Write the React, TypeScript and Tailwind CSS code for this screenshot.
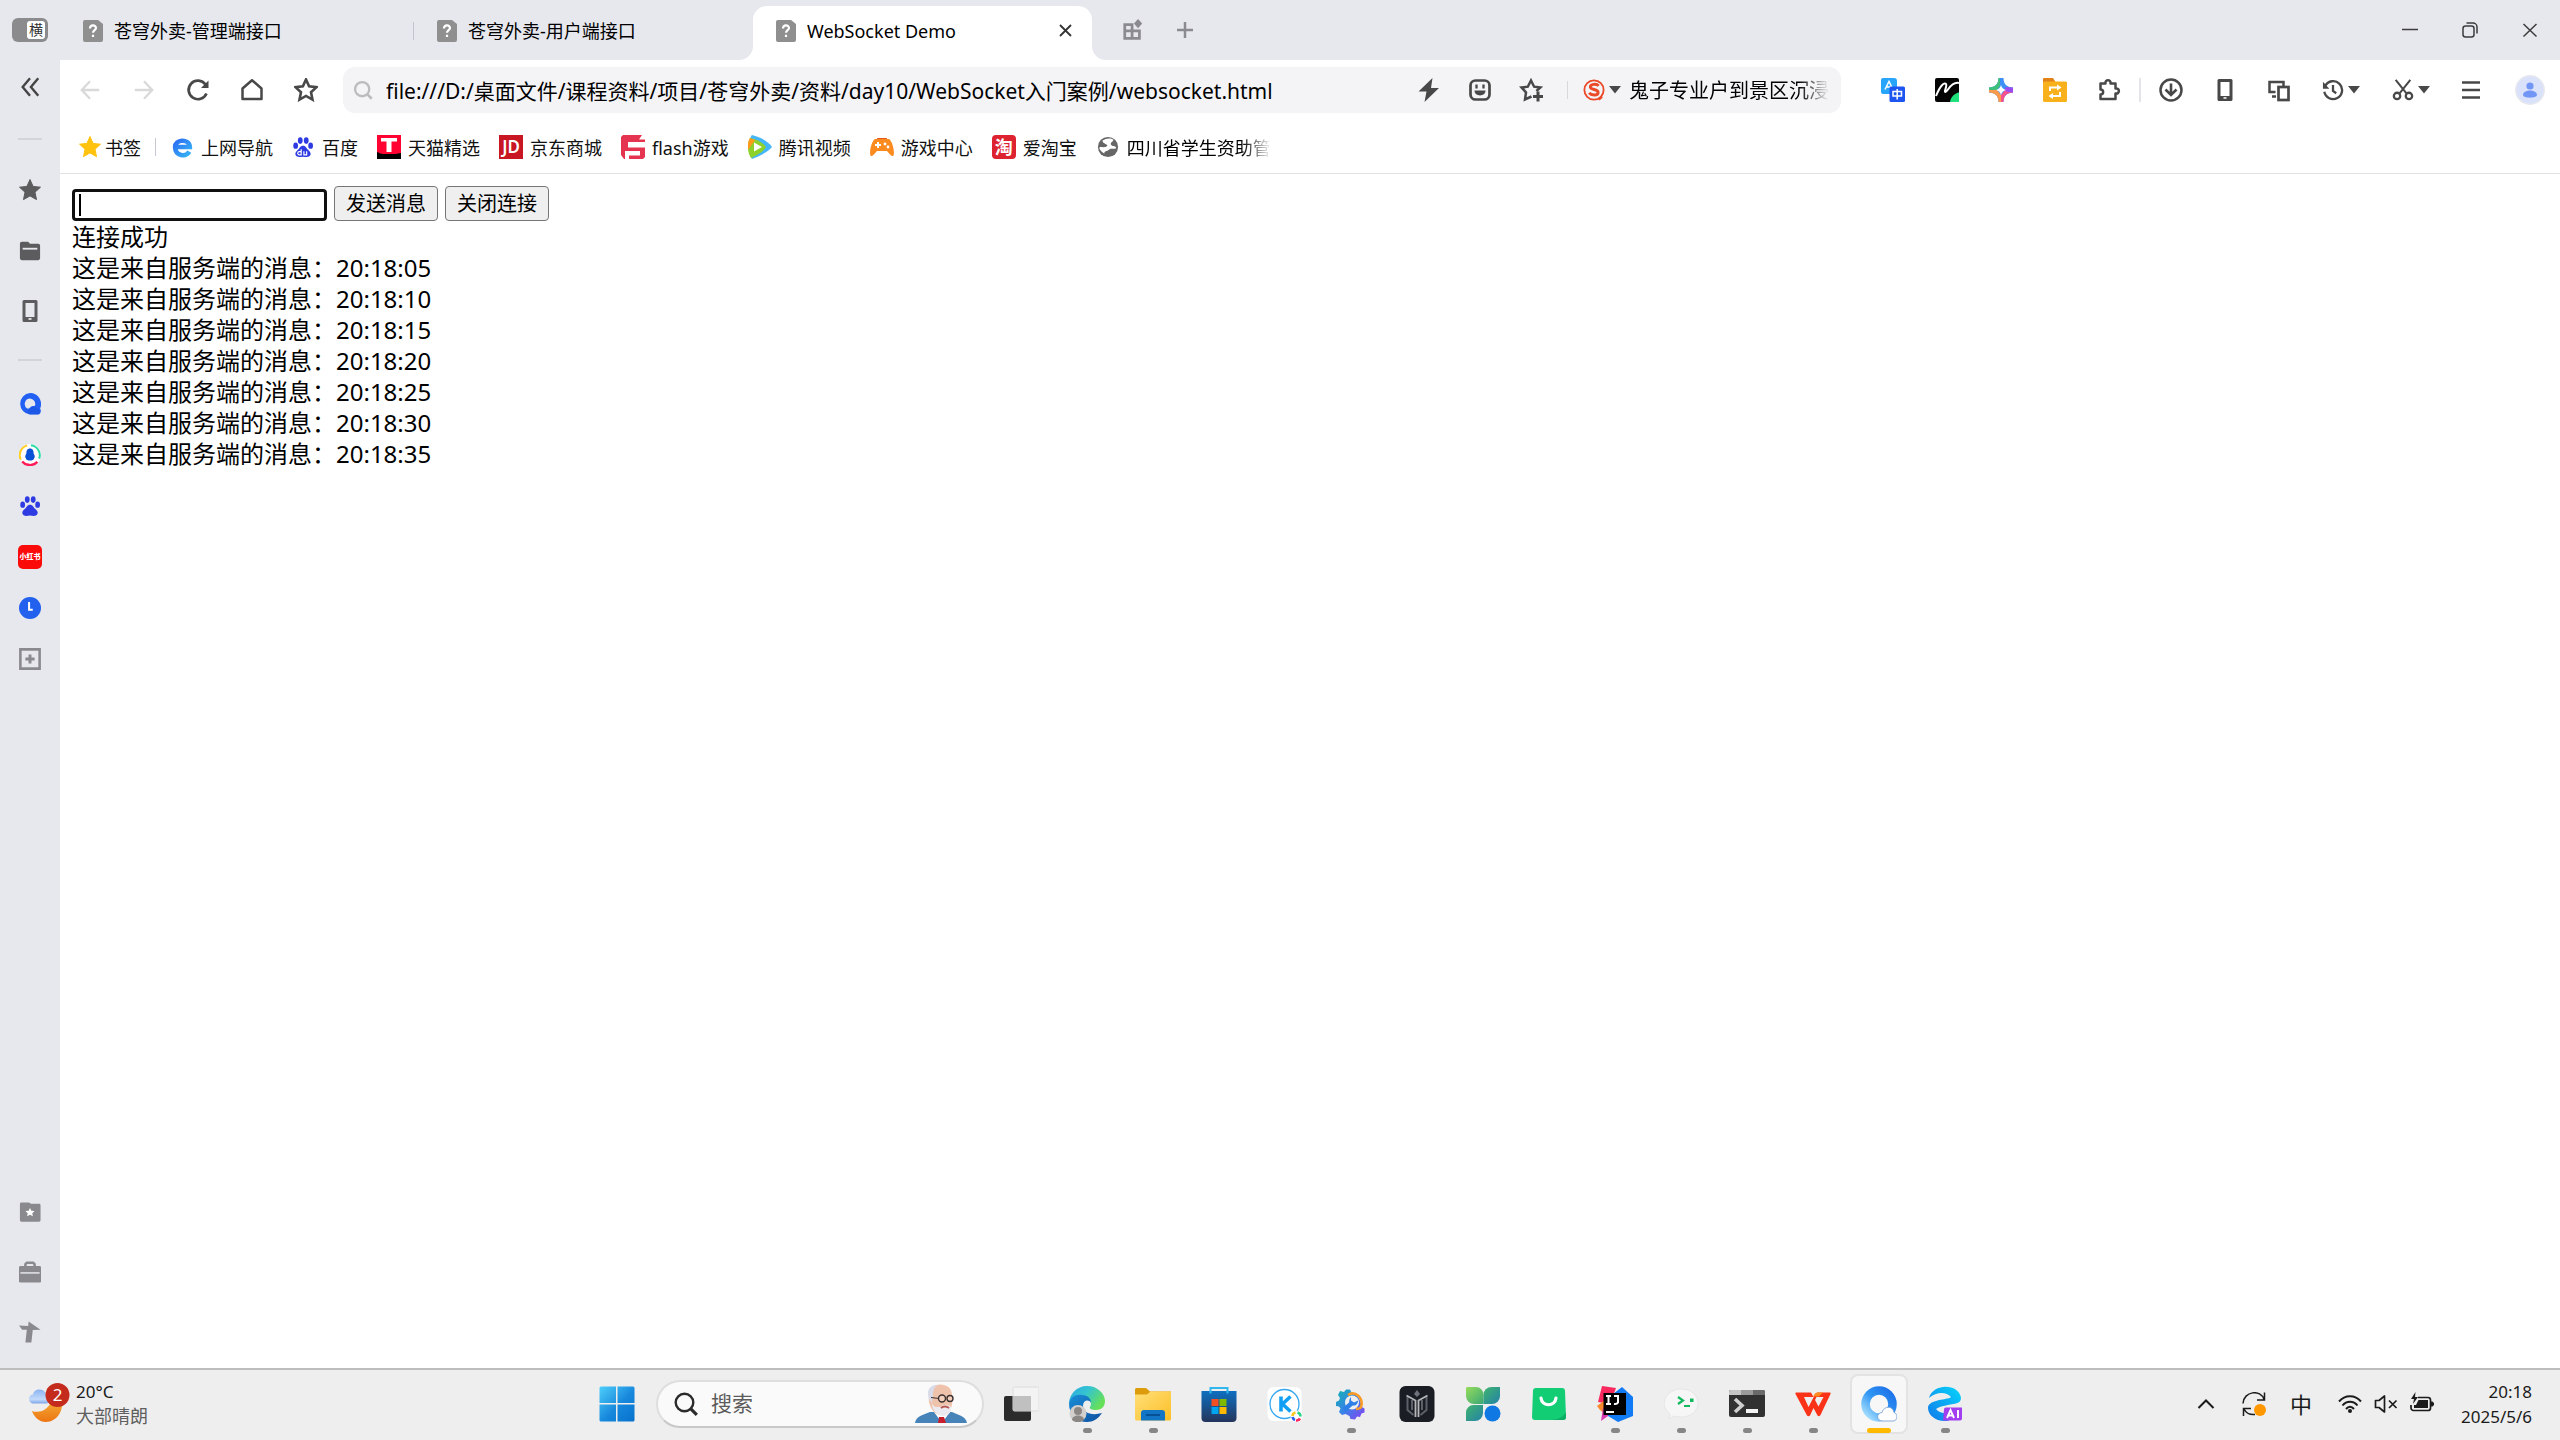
import React from "react";

type IconProps = { size?: number; box?: string; className?: string; children: React.ReactNode };

function Svg({ size = 24, box = "0 0 24 24", className = "", children }: IconProps) {
  return (
    <svg width={size} height={size} viewBox={box} fill="none" className={"shrink-0 " + className} aria-hidden="true">
      {children}
    </svg>
  );
}

const line = { stroke: "currentColor", strokeWidth: 2.5, fill: "none" } as const;

/* ---------- shared glyphs ---------- */

const STAR = "M12 1.5l3.1 6.9 7.4.8-5.5 5 1.5 7.4L12 17.9l-6.5 3.7L7 14.2l-5.500-5 7.400-.8z";

function Caret() {
  return (
    <svg width="14" height="8" viewBox="0 0 14 8" className="shrink-0 text-[#484848]" aria-hidden="true">
      <path d="M1 0h12L7 7.500z" fill="currentColor" />
    </svg>
  );
}

function PhoneIcon() {
  return (
    <Svg>
      <path {...line} d="M6 2.500h12v19H6z" strokeWidth={3} strokeLinejoin="round" />
      <path d="M6 18h12v4H6z" fill="currentColor" />
      <path d="M10.500 19.200h3v1.500h-3z" fill="#fff" />
    </Svg>
  );
}

function DocIcon() {
  return (
    <svg width="22" height="22" viewBox="0 0 22 22" className="shrink-0" aria-hidden="true">
      <path d="M3 0h13l5 4v16a2 2 0 0 1-2 2H3a2 2 0 0 1-2-2V2a2 2 0 0 1 2-2z" fill="#8f8f8f" />
      <path d="M8 8.500c0-4 6-4 6-.5 0 2.200-3 2.200-3 4.800M11 14.800v2.200" stroke="#fff" strokeWidth="2.200" fill="none" />
    </svg>
  );
}

function PawIcon({ face = false }: { face?: boolean }) {
  return (
    <Svg size={22}>
      <g fill="#2e3be2">
        <ellipse cx="4" cy="10.500" rx="2.600" ry="3.500" />
        <ellipse cx="9" cy="5" rx="2.600" ry="3.600" />
        <ellipse cx="15.500" cy="5" rx="2.600" ry="3.600" />
        <ellipse cx="20.300" cy="10.500" rx="2.600" ry="3.500" />
        <path d="M12 10.500c3 0 3.600 2.600 5.500 4.400 2.500 2.300 3.600 4 2.400 6.200-1.400 2.600-5 1.400-7.900 1.400s-6.500 1.200-7.900-1.400c-1.200-2.200-.1-3.900 2.400-6.200 1.900-1.800 2.500-4.400 5.500-4.400z" />
      </g>
      {face && <path d="M10 14.500v6H8a1.500 1.500 0 0 1 0-3.500h2M13 16.500v4h3v-4" stroke="#fff" strokeWidth="1.300" />}
    </Svg>
  );
}

/* ---------- tab strip ---------- */

function TabStrip() {
  return (
    <header className="flex h-[60px] items-end bg-[#e7e8ee] text-[18px]">
      <div className="flex h-[60px] w-[60px] shrink-0 items-center justify-center">
        <button aria-label="横向标签" className="flex h-6 w-9 items-center justify-end rounded-md bg-[#8b8b8d] p-[3px]">
          <span className="flex h-[18px] w-[18px] items-center justify-center rounded-[3px] bg-white text-[14px] leading-none text-[#333]">横</span>
        </button>
      </div>
      <div role="tablist" className="flex items-end">
        <button role="tab" aria-selected="false" className="flex h-[54px] w-[354px] items-center gap-[10px] pb-[5px] pl-[22px]">
          <DocIcon />
          <span className="pt-0.5">苍穹外卖-管理端接口</span>
          <span className="ml-auto h-[18px] w-px bg-[#c3c4d0]" />
        </button>
        <button role="tab" aria-selected="false" className="flex h-[54px] w-[339px] items-center gap-[10px] pb-[5px] pl-[22px]">
          <DocIcon />
          <span className="pt-0.5">苍穹外卖-用户端接口</span>
        </button>
        <div className="relative flex h-[54px] w-[339px] items-center rounded-t-[14px] bg-white pr-4 pb-[5px] pl-[22px]">
          <svg width="14" height="14" viewBox="0 0 14 14" className="absolute bottom-0 -left-[14px]" aria-hidden="true">
            <path d="M14 0v14H0A14 14 0 0 0 14 0z" fill="#fff" />
          </svg>
          <svg width="14" height="14" viewBox="0 0 14 14" className="absolute -right-[14px] bottom-0" aria-hidden="true">
            <path d="M0 0v14h14A14 14 0 0 1 0 0z" fill="#fff" />
          </svg>
          <button role="tab" aria-selected="true" className="flex grow items-center gap-[10px]">
            <DocIcon />
            <span className="pt-0.5">WebSocket Demo</span>
          </button>
          <button aria-label="关闭标签" className="flex h-[22px] w-[22px] items-center justify-center text-[#333]">
            <svg width="13" height="13" viewBox="0 0 13 13" aria-hidden="true">
              <path d="M1 1l11 11M12 1L1 12" stroke="currentColor" strokeWidth="1.800" />
            </svg>
          </button>
        </div>
      </div>
      <div className="flex h-[60px] items-center pl-[15px] text-[#8b8b8f]">
        <button aria-label="标签管理" className="flex w-[52px] justify-center">
          <Svg size={22}>
            <path d="M3 6h8v15H3zM11 13h8v8H3M3 13h8" stroke="currentColor" strokeWidth="3" />
            <path d="M17.500 0l4.500 5-4.500 5L13 5z" fill="currentColor" />
          </Svg>
        </button>
        <button aria-label="新建标签" className="flex w-[52px] justify-center">
          <svg width="16" height="16" viewBox="0 0 16 16" aria-hidden="true">
            <path d="M8 0v16M0 8h16" stroke="currentColor" strokeWidth="2.500" />
          </svg>
        </button>
      </div>
      <div className="ml-auto flex h-[60px] text-[#3c3c3c]">
        <button aria-label="最小化" className="flex w-[60px] items-center justify-center">
          <svg width="16" height="16" viewBox="0 0 16 16" fill="none" stroke="currentColor" strokeWidth="1.500">
            <path d="M0 7.500h16" />
          </svg>
        </button>
        <button aria-label="还原" className="flex w-[60px] items-center justify-center">
          <svg width="16" height="16" viewBox="0 0 16 16" fill="none" stroke="currentColor" strokeWidth="1.500">
            <rect x="1" y="4" width="11" height="11" rx="2.500" />
            <path d="M4.500 1H11a4 4 0 0 1 4 4v6.500" />
          </svg>
        </button>
        <button aria-label="关闭" className="flex w-[60px] items-center justify-center">
          <svg width="16" height="16" viewBox="0 0 16 16" fill="none" stroke="currentColor" strokeWidth="1.500">
            <path d="M1.500 2l13 12.500M14.500 2l-13 12.500" />
          </svg>
        </button>
      </div>
    </header>
  );
}

/* ---------- toolbar ---------- */

function ToolButton({ label, children, className = "w-[54px]" }: { label: string; children: React.ReactNode; className?: string }) {
  return (
    <button aria-label={label} className={"flex h-[46px] shrink-0 items-center justify-center " + className}>
      {children}
    </button>
  );
}

function Toolbar() {
  return (
    <div className="flex h-[60px] items-center pl-[3px] text-[#484848]">
      <ToolButton label="后退">
        <Svg size={22} className="text-[#d9d9d9]"><path {...line} d="M22 12H3M12 2.500L3 12l9 9.500" /></Svg>
      </ToolButton>
      <ToolButton label="前进">
        <Svg size={22} className="text-[#d9d9d9]"><path {...line} d="M2 12h19M12 2.500L21 12l-9 9.500" /></Svg>
      </ToolButton>
      <ToolButton label="刷新">
        <Svg>
          <path {...line} strokeWidth={2.700} d="M20.500 15.500A9.300 9.300 0 1 1 19.500 6.500" />
          <path d="M22.500 2.500v7.500h-7.500z" fill="currentColor" />
        </Svg>
      </ToolButton>
      <ToolButton label="主页">
        <Svg><path {...line} d="M2.500 10.500L12 2.200l9.500 8.300V21h-19z" strokeLinejoin="round" /></Svg>
      </ToolButton>
      <ToolButton label="收藏">
        <Svg><path {...line} d={STAR} strokeWidth={2.600} /></Svg>
      </ToolButton>

      <div className="ml-[10px] flex h-[46px] min-w-0 grow items-center rounded-xl bg-[#f4f4f7] pl-[10px]">
        <Svg size={20} className="text-[#bcbcbe]">
          <circle cx="11" cy="11" r="8.500" stroke="currentColor" strokeWidth="2.800" />
          <path d="M17 17l5.500 5.500" stroke="currentColor" strokeWidth="3.200" />
        </Svg>
        <input
          aria-label="地址"
          defaultValue="file:///D:/桌面文件/课程资料/项目/苍穹外卖/资料/day10/WebSocket入门案例/websocket.html"
          className="ml-[13px] h-full min-w-0 grow bg-transparent text-[21px] text-black outline-none"
        />
        <ToolButton label="极速模式" className="w-[51px]">
          <Svg><path d="M15.500 0L1.500 13.500h8L7.500 24l14.500-14h-8z" fill="currentColor" /></Svg>
        </ToolButton>
        <ToolButton label="表情" className="w-[51px]">
          <Svg>
            <rect x="2.500" y="2.500" width="19" height="19" rx="5" {...line} strokeWidth={2.700} />
            <path d="M8.500 6.500v4M15.500 6.500v4" stroke="currentColor" strokeWidth="2.300" />
            <path d="M6.500 12.500h11c0 6.500-11 6.500-11 0z" fill="currentColor" />
          </Svg>
        </ToolButton>
        <ToolButton label="添加收藏" className="w-[51px]">
          <Svg>
            <path {...line} d="M12.500 18.500L6 21.500l1-7L2.500 9.400l6.300-.7L12 2.500l3.100 6.200 6.300.7-4 3.600" />
            <path d="M19 13.500v10M14 18.500h10" stroke="currentColor" strokeWidth="3" />
          </Svg>
        </ToolButton>
        <span className="ml-[11px] h-[18px] w-px bg-[#d8d8da]" />
        <ToolButton label="搜索引擎" className="ml-[14px] w-10 gap-[3px]">
          <Svg size={22}>
            <circle cx="12" cy="12" r="10.500" stroke="#ea4a28" strokeWidth="2" />
            <path d="M17 7.500c-2-2.600-9.500-2.200-9 1.400.5 3.500 8.500 1.600 8.500 5.700 0 3.800-7.500 3.600-9.800.6" stroke="#ea4a28" strokeWidth="3.200" />
            <path d="M16 21.500l4.500-3.500 1 2.500-3.500 3z" fill="#ea4a28" />
          </Svg>
          <Caret />
        </ToolButton>
        <span className="ml-[7px] w-[200px] shrink-0 overflow-hidden bg-linear-to-r from-black from-85% to-transparent bg-clip-text pt-0.5 text-[20px] whitespace-nowrap text-transparent">
          鬼子专业户到景区沉浸
        </span>
        <span className="w-3 shrink-0" />
      </div>

      <ToolButton label="翻译" className="ml-[25px] w-[54px]">
        <Svg>
          <path d="M0 2a2 2 0 0 1 2-2h11a3 3 0 0 1 3 3v13H2a2 2 0 0 1-2-2z" fill="#27a5fd" />
          <path d="M4 11.500L8 3.500l4 8M5.500 9h5" stroke="#fff" strokeWidth="1.500" />
          <rect x="8.500" y="8.500" width="15.500" height="15.500" rx="1.500" fill="#1e55f0" />
          <path d="M12 13.500h8.500v4.500H12zM16.200 11v10.500" stroke="#fff" strokeWidth="1.500" />
        </Svg>
      </ToolButton>
      <ToolButton label="笔记">
        <Svg>
          <rect width="24" height="24" rx="2" fill="#050505" />
          <path d="M1 18C5 8 9 4 11 6c1.500 2-2.500 8-.5 8S16 3 24 5" stroke="#fff" strokeWidth="2" />
          <path d="M24 14.500V24h-9c.5-5 5-9 9-9.500z" fill="#1fe27c" />
        </Svg>
      </ToolButton>
      <ToolButton label="智能助手">
        <Svg>
          <path d="M9.500 0h5c0 6 3.500 9.500 9.500 9.500v5c-6 0-9.500 3.500-9.500 9.500h-5c0-6-3.500-9.500-9.500-9.500v-5c6 0 9.500-3.500 9.500-9.500z" fill="#3d8ff5" />
          <path d="M9.500 0H11v8l-3 4H0V9.500c6 0 9.500-3.500 9.500-9.500z" fill="#3fc07a" />
          <path d="M0 12h8l4 5v7H9.500c0-6-3.500-9.500-9.500-9.500z" fill="#fb9a4b" />
          <path d="M12 24v-7l4-5h8v2.500c-6 0-9.500 3.500-9.500 9.500z" fill="#f5518d" />
          <path d="M17 9l7 .5v5l-5-.5-4-2z" fill="#9a4cf0" />
          <path d="M12 7c1 3 2 4 5 5-3 1-4 2-5 5-1-3-2-4-5-5 3-1 4-2 5-5z" fill="#fff" />
        </Svg>
      </ToolButton>
      <ToolButton label="文件转换">
        <Svg>
          <path d="M0 1a1 1 0 0 1 1-1h9l2.500 4H24v4H0z" fill="#e28118" />
          <rect y="3.500" width="24" height="20.500" rx="1.500" fill="#f8b11b" />
          <path d="M7 13V9.500h8.500M17 14v4H8.500" stroke="#fff" strokeWidth="2" />
          <path d="M14 6.500l4.500 3-4.500 3zM10 15l-4.500 3 4.500 3z" fill="#fff" />
        </Svg>
      </ToolButton>
      <ToolButton label="扩展">
        <Svg>
          <path {...line} strokeLinejoin="round" d="M3.500 5.500h5c-.8-4.500 5.800-4.500 5 0h5v5c4.500-.8 4.500 5.800 0 5v5.500h-15v-4.500c3.500 0 3.500-5 0-5z" />
        </Svg>
      </ToolButton>
      <span className="mx-[3px] h-6 w-0.5 shrink-0 bg-[#e4e4ea]" />
      <ToolButton label="下载">
        <Svg>
          <circle cx="12" cy="12" r="10.500" {...line} />
          <path d="M12 5.500v11M6.500 11.500L12 17l5.500-5.500" stroke="currentColor" strokeWidth="2.600" />
        </Svg>
      </ToolButton>
      <ToolButton label="手机"><PhoneIcon /></ToolButton>
      <ToolButton label="多屏互动">
        <Svg>
          <path {...line} d="M8.500 14H2.500V4h14v4M5 18.500h4" />
          <rect x="11.500" y="9" width="10" height="13" {...line} strokeWidth={2.700} />
        </Svg>
      </ToolButton>
      <ToolButton label="历史" className="w-[70px] gap-[3px]">
        <Svg size={22}>
          <path {...line} d="M3.500 7.500A9.800 9.800 0 1 1 2.500 14" />
          <path d="M1 3v7.500h7z" fill="currentColor" />
          <path {...line} d="M12 6.500v6.500l3.500 2.500" />
        </Svg>
        <Caret />
      </ToolButton>
      <ToolButton label="截图" className="w-[70px] gap-[3px]">
        <Svg size={22}>
          <path d="M4 1l12 15M20 1L8 16" stroke="currentColor" strokeWidth="2.200" />
          <circle cx="5.500" cy="18.500" r="3.500" {...line} />
          <circle cx="18.500" cy="18.500" r="3.500" {...line} />
        </Svg>
        <Caret />
      </ToolButton>
      <ToolButton label="菜单" className="w-[50px]">
        <svg width="18" height="18" viewBox="0 0 18 18"><path d="M0 1.500h18M0 9h18M0 16.500h18" stroke="currentColor" strokeWidth="2.600" /></svg>
      </ToolButton>
      <ToolButton label="账户" className="ml-1 w-[60px]">
        <Svg size={30} box="0 0 30 30">
          <circle cx="15" cy="15" r="14.200" fill="#dae2fb" stroke="#e6e8ee" strokeWidth="1.500" />
          <circle cx="15" cy="11" r="3.600" fill="#7296f5" />
          <path d="M8 20c0-6 14-6 14 0 0 3.500-14 3.500-14 0z" fill="#7296f5" />
        </Svg>
      </ToolButton>
    </div>
  );
}

/* ---------- bookmarks ---------- */

function Bookmark({ icon, label, fade = false }: { icon: React.ReactNode; label: string; fade?: boolean }) {
  return (
    <a href="#" className="flex shrink-0 items-center gap-[7px] whitespace-nowrap">
      <span className="flex w-6 justify-center">{icon}</span>
      {fade ? (
        <span className="w-[144px] overflow-hidden bg-linear-to-r from-black from-80% to-transparent bg-clip-text pt-0.5 text-transparent">{label}</span>
      ) : (
        <span className="pt-0.5">{label}</span>
      )}
    </a>
  );
}

function Bookmarks() {
  return (
    <nav aria-label="书签栏" className="flex h-[54px] items-center gap-[18px] border-b border-[#e2e2e5] pl-[18px] text-[18px] leading-6 text-[#111]">
      <div className="flex items-center gap-[14px]">
        <a href="#" className="flex items-center gap-[3px]">
          <Svg><path d={STAR} fill="#ffc20e" stroke="#ffc20e" /></Svg>
          <span className="pt-0.5">书签</span>
        </a>
        <span className="h-[18px] w-px bg-[#c8c8d4]" />
        <Bookmark
          label="上网导航"
          icon={
            <Svg size={22}>
              <path d="M20 17c-4 6.500-15 5-15.500-4.500C4 3 20 2.500 20.500 12H7" stroke="url(#eg)" strokeWidth="5" />
              <defs>
                <linearGradient id="eg" x1="0" y1="0" x2="1" y2="1">
                  <stop stopColor="#2c6df2" />
                  <stop offset="1" stopColor="#35b4f6" />
                </linearGradient>
              </defs>
            </Svg>
          }
        />
      </div>
      <div className="flex items-center gap-[19px]">
        <Bookmark label="百度" icon={<PawIcon face />} />
        <Bookmark
          label="天猫精选"
          icon={
            <Svg>
              <rect width="24" height="24" fill="#ff0432" />
              <path d="M0 17c3 1 4 2 6 2h12c3 0 4-1 6-1v6H0z" fill="#000" />
              <path d="M4 3h16v3.500h-5.500V17h-5V6.500H4z" fill="#fff" />
            </Svg>
          }
        />
        <Bookmark
          label="京东商城"
          icon={<span className="flex h-6 w-6 items-center justify-center bg-[#c91623] text-[17px] leading-none font-semibold text-white">JD</span>}
        />
        <Bookmark
          label="flash游戏"
          icon={
            <Svg>
              <path d="M2 0h19l-3 4.500h6V7H7v5.500h17V22l-2 2H8v-3.500h11V16H4v8H3l-3-4V2z" fill="#e5344f" />
            </Svg>
          }
        />
        <Bookmark
          label="腾讯视频"
          icon={
            <Svg>
              <path d="M4 0c-4 4-4 19 0 24C12 21 20 17 24 12 20 6 12 2 4 0z" fill="#45b6f7" />
              <path d="M2 3C-1 8-1 17 3 23c6-3 12-6 15-11C14 7 8 4 2 3z" fill="#8fd12b" />
              <path d="M2 3C0 6-.5 10 0 15l7-10z" fill="#ff9a1c" />
              <path d="M6 7.500v9l8-4.500z" fill="#fff" />
            </Svg>
          }
        />
        <Bookmark
          label="游戏中心"
          icon={
            <Svg>
              <path d="M6 5l1.500-2h9L18 5z" fill="#e8541a" />
              <path d="M5 4h14c3.500 2 6 13 4.500 16.500-2 2-4.500-2.500-6.500-4.500H7c-2 2-4.500 6.500-6.500 4.500C-1 17 1.500 6 5 4z" fill="#fb8a1f" />
              <path d="M8 7v6M5 10h6" stroke="#fff" strokeWidth="2" />
              <circle cx="15" cy="9" r="1.400" fill="#fff" /><circle cx="18" cy="12" r="1.400" fill="#fff" />
            </Svg>
          }
        />
        <Bookmark
          label="爱淘宝"
          icon={<span className="flex h-6 w-6 items-center justify-center rounded-sm bg-[#dd2230] text-[18px] leading-none font-bold text-white">淘</span>}
        />
        <Bookmark
          fade
          label="四川省学生资助管理"
          icon={
            <Svg size={22}>
              <circle cx="12" cy="12" r="11" fill="#666" />
              <path d="M6 5c4-3 9-3 12-1-1 3-3 2-3 5 1 3 5 1 6 4-2 2-6 0-8 2s-5 1-5 4C3 16 2 13 3 12c3 0 6 1 8-1s-5-2-5-6z" fill="#fff" />
            </Svg>
          }
        />
      </div>
    </nav>
  );
}

/* ---------- side bar ---------- */

function SideButton({ label, children, className = "h-[61px]" }: { label: string; children: React.ReactNode; className?: string }) {
  return (
    <button aria-label={label} className={"flex w-full items-center justify-center " + className}>
      {children}
    </button>
  );
}

function SideBar() {
  return (
    <aside className="flex w-[60px] shrink-0 flex-col items-center bg-[#e7e8ee] text-[#5c5c5e]">
      <SideButton label="展开侧边栏" className="h-[54px] text-[#444]">
        <Svg size={22}><path {...line} strokeWidth={2.600} d="M12 2.500L4 12l8 9.500M21 2.500L13 12l8 9.500" /></Svg>
      </SideButton>
      <span className="mt-6 mb-[19px] h-0.5 w-6 bg-[#d3d4da]" />
      <SideButton label="收藏夹"><Svg><path d={STAR} fill="currentColor" stroke="currentColor" /></Svg></SideButton>
      <SideButton label="文件夹">
        <Svg size={22}>
          <path d="M1 4a2 2 0 0 1 2-2h7l2 2h9a2 2 0 0 1 2 2v14a2 2 0 0 1-2 2H3a2 2 0 0 1-2-2z" fill="currentColor" />
          <path d="M4 9.500h16" stroke="#e7e8ee" strokeWidth="2" />
        </Svg>
      </SideButton>
      <SideButton label="手机" className="h-[60px]"><PhoneIcon /></SideButton>
      <span className="mt-[18px] mb-[17px] h-0.5 w-6 bg-[#d3d4da]" />
      <SideButton label="QQ浏览器" className="h-[51px]">
        <Svg size={22}>
          <path fillRule="evenodd" d="M12 0a12 12 0 0 1 11 17c1.500 2 1 6-2.500 6.500H12A11.800 11.800 0 0 1 12 0zm0 6a6 6 0 0 0-3 11c2.500 1 3-2.500 6-2.800 1.500-.2 2-.2 2.500-.7A6 6 0 0 0 12 6z" fill="#2260f4" />
          <path d="M12 23.500c-5-1-3-6 0-5.500 1-4 6-4 7-1 4-.5 6 5.500 1.500 6.500z" fill="#1a4fd8" opacity=".45" />
        </Svg>
      </SideButton>
      <SideButton label="腾讯新闻" className="h-[51px]">
        <Svg size={22}>
          <circle cx="12" cy="12" r="12" fill="#fff" />
          <path d="M2 17A11 11 0 0 1 9 1.500" stroke="#ffce1f" strokeWidth="2.200" />
          <path d="M13 1.300A11 11 0 0 1 22 16" stroke="#2bdaa8" strokeWidth="2.200" />
          <path d="M20 19.500A11 11 0 0 1 3.500 19" stroke="#ff1e5a" strokeWidth="2.600" />
          <path d="M12 5c3 0 4 2.500 4 5.500 1.500 2 1.500 4 .5 5-.5 2-2 2.500-4.500 2.500S8 17.500 7.500 15.500c-1-1-1-3 .5-5C8 7.500 9 5 12 5z" fill="#0a52d6" />
        </Svg>
      </SideButton>
      <SideButton label="百度" className="h-[51px]"><PawIcon /></SideButton>
      <SideButton label="小红书" className="h-[51px]">
        <span className="flex h-6 w-6 items-center justify-center rounded-[5px] bg-[#fb0a0a] text-[7px] leading-none font-black text-white">小红书</span>
      </SideButton>
      <SideButton label="历史" className="h-[51px]">
        <Svg size={22}><circle cx="12" cy="12" r="12" fill="#2260ee" /><path d="M11 5.500V14h4" stroke="#fff" strokeWidth="2.200" /></Svg>
      </SideButton>
      <SideButton label="添加" className="h-[51px] text-[#8a8a8e]">
        <Svg size={22}><path {...line} strokeWidth={2.800} d="M1.500 1.500h21v21h-21z" /><path d="M12 7v10M7 12h10" stroke="currentColor" strokeWidth="3.200" /></Svg>
      </SideButton>
      <div className="mt-auto mb-[6px] w-full text-[#8a8a8e]">
        <SideButton label="收藏文件夹" className="h-[60px]">
          <Svg size={22}>
            <path d="M1 3a1.500 1.500 0 0 1 1.500-1.500H11L13 3h9a1.500 1.500 0 0 1 1.500 1.500V21a1.500 1.500 0 0 1-1.500 1.500H2.500A1.500 1.500 0 0 1 1 21z" fill="currentColor" />
            <path d="M12 7.500l1.500 3 3.500.5-2.500 2.300.6 3.400-3.100-1.600-3.100 1.600.6-3.400L7 11l3.500-.5z" fill="#fff" />
          </Svg>
        </SideButton>
        <SideButton label="工具箱" className="h-[60px]">
          <Svg size={22}>
            <path d="M7 6V3.500L8.500 2h7L17 3.500V6" stroke="currentColor" strokeWidth="2.800" />
            <rect x="0" y="5.500" width="24" height="18" rx="1.500" fill="currentColor" />
            <path d="M1.500 13h21" stroke="#e7e8ee" strokeWidth="1.600" />
          </Svg>
        </SideButton>
        <SideButton label="置顶" className="h-[60px]">
          <Svg size={22}><path d="M0 5l10 .5.5-5L23.500 9.500 15 9.800 13.500 23.500H7L8.500 9.500H3.500z" fill="currentColor" /></Svg>
        </SideButton>
      </div>
    </aside>
  );
}

/* ---------- page ---------- */

const TIMES = ["20:18:05", "20:18:10", "20:18:15", "20:18:20", "20:18:25", "20:18:30", "20:18:35"];

function Page() {
  return (
    <main className="grow bg-white px-3 pt-3 text-[24px] leading-[31px] text-black">
      <div className="flex items-end gap-[7px]">
        <span className="relative flex">
          <input aria-label="消息" className="h-8 w-[255px] rounded-[4px] border-[3px] border-[#101010] px-1 text-[20px] outline-none" />
          <span className="absolute top-[5px] left-[7px] h-[22px] w-0.5 bg-black" />
        </span>
        <button className="h-[35px] rounded-[4px] border border-[#767676] bg-[#efefef] px-[11px] text-[20px] leading-8">发送消息</button>
        <button className="h-[35px] rounded-[4px] border border-[#767676] bg-[#efefef] px-[11px] text-[20px] leading-8">关闭连接</button>
      </div>
      <div>
        <p>连接成功</p>
        {TIMES.map((t) => (
          <p key={t}>这是来自服务端的消息：{t}</p>
        ))}
      </div>
    </main>
  );
}

/* ---------- task bar ---------- */

function TaskButton({ label, dot = false, active = false, children }: { label: string; dot?: boolean; active?: boolean; children: React.ReactNode }) {
  return (
    <button aria-label={label} className="relative flex h-[68px] w-[66px] shrink-0 items-center justify-center">
      {active && <span className="absolute inset-x-1 inset-y-1 rounded-lg border-2 border-[#e3e3e3] bg-[#f7f7f7]" />}
      <svg width="36" height="36" viewBox="0 0 36 36" fill="none" className="relative" aria-hidden="true">{children}</svg>
      {dot && <span className="absolute bottom-[5px] h-[5px] w-[9px] rounded-full bg-[#868686]" />}
      {active && <span className="absolute bottom-[5px] h-[5px] w-6 rounded-full bg-[#ffb900]" />}
    </button>
  );
}

function TaskBar() {
  return (
    <footer className="grid h-[72px] grid-cols-[1fr_auto_1fr] items-center border-t-2 border-[#bdbdbd] bg-[#eeeeee] pb-0.5">
      <button className="flex items-center gap-[6px] pl-7 text-left" aria-label="天气">
        <svg width="42" height="42" viewBox="0 0 42 42" aria-hidden="true" className="shrink-0">
          <defs>
            <linearGradient id="moon" x1="0" y1="0" x2="0" y2="1"><stop stopColor="#f6b53c" /><stop offset="1" stopColor="#ec7412" /></linearGradient>
            <linearGradient id="cloud" x1="0" y1="0" x2="0" y2="1"><stop stopColor="#8bb3f2" /><stop offset=".7" stopColor="#c3dafa" /><stop offset="1" stopColor="#7ea6ea" /></linearGradient>
          </defs>
          <path d="M4 28c8 3 19-2 20-14l9 2c4 12-5 23-15 23-7 0-12-5-14-11z" fill="url(#moon)" />
          <path d="M6 20.500C0 20.500-1 12 5 11.500 6 5 16 5 18 11c6 0 6 9.500 0 9.500z" fill="url(#cloud)" />
          <circle cx="29.500" cy="12" r="12" fill="#c42b1c" />
          <text x="29.500" y="18" textAnchor="middle" fontSize="17" fill="#fff" fontFamily="Noto Sans">2</text>
        </svg>
        <span className="flex flex-col text-[18px] leading-[25px]">
          <span className="text-[17px] text-[#1b1b1b]">20°C</span>
          <span className="text-[#5f5f5f]">大部晴朗</span>
        </span>
      </button>

      <div className="flex items-center pl-0.5">
        <TaskButton label="开始">
          <defs><linearGradient id="win" x1="0" y1="0" x2="36" y2="36" gradientUnits="userSpaceOnUse"><stop stopColor="#4fd0fb" /><stop offset=".55" stopColor="#1688dc" /><stop offset="1" stopColor="#0670cc" /></linearGradient></defs>
          <path d="M2 .5h15v16.500H.5V2A1.500 1.500 0 0 1 2 .5zM18.500.5H34A1.500 1.500 0 0 1 35.500 2v15h-17zM.5 18.500H17v17H2A1.500 1.500 0 0 1 .5 34zM18.500 18.500h17V34a1.500 1.500 0 0 1-1.500 1.500H18.500z" fill="url(#win)" />
        </TaskButton>
        <label className="mr-1 ml-1.5 flex h-12 w-[328px] items-center rounded-full border-2 border-[#dedede] border-b-[#c8c8c8] bg-[#fafafa] pl-4">
          <Svg className="text-[#2b2b2b]">
            <circle cx="10.500" cy="10.500" r="8.800" stroke="currentColor" strokeWidth="2.400" />
            <path d="M16.800 16.800l6 6" stroke="currentColor" strokeWidth="3.200" />
          </Svg>
          <input aria-label="搜索" placeholder="搜索" className="ml-[13px] w-[204px] bg-transparent text-[21px] outline-none placeholder:text-[#5c5c5c]" />
          <svg width="52" height="40" viewBox="0 0 52 40" className="shrink-0" aria-hidden="true">
            <path d="M0 39c1-7 8-8 15-11h22c6 3 14 4 15 11z" fill="#4583b9" />
            <path d="M19 28l8 11 8-11z" fill="#fff" />
            <path d="M24 33h5l2 6h-8z" fill="#c6202f" />
            <path d="M14 12C13-3 37-3 37 11c1 6 0 13-3 17-4 4-11 4-15 0-4-5-6-10-5-16z" fill="#efc3ab" />
            <path d="M14 15c-3-8 0-14 9-14.500C19 3 18 7 18 11l-1 8z" fill="#dadbe8" />
            <path d="M17 19c2 5 5 4 9 4 3-3 6-3 10 0 1 5-3 9-8 9-6-1-11-5-11-13z" fill="#eceaf1" />
            <path d="M26 24q4-3 8 0" stroke="#b5544c" strokeWidth="1.800" fill="none" />
            <circle cx="27" cy="14.500" r="3.500" fill="#f3d0bd" stroke="#3b3030" strokeWidth="1.400" />
            <circle cx="35" cy="14.500" r="3" fill="#f3d0bd" stroke="#3b3030" strokeWidth="1.400" />
            <path d="M16 13.500l8 1" stroke="#3b3030" />
          </svg>
        </label>
        <TaskButton label="任务视图">
          <rect x="1" y="10" width="27" height="25" rx="2" fill="#2b2b2b" />
          <rect x="10" y="1" width="26" height="24" rx="1.500" fill="#f3f3f3" stroke="#dcdcdc" />
          <path d="M10 10h18v15H10z" fill="#c0c0c0" />
        </TaskButton>
        <TaskButton label="Edge" dot>
          <defs>
            <linearGradient id="ed1" x1="0" y1="0" x2="1" y2=".5"><stop stopColor="#2aa8e4" /><stop offset=".5" stopColor="#35c4d0" /><stop offset="1" stopColor="#66e05a" /></linearGradient>
            <linearGradient id="ed2" x1="0" y1="0" x2="1" y2="1"><stop stopColor="#1b8fd8" /><stop offset="1" stopColor="#0c4fa0" /></linearGradient>
          </defs>
          <path d="M0 18C0 8 8 0 18 0c11 0 18 8 18 15 0 6-4 9-9 9-4 0-7-1-6-3 3-5-1-9-6-9C8 12 2 14 0 18z" fill="url(#ed1)" />
          <path d="M0 18c1-7 7-10 13-9 6 0 9 4 9 8-2-4-8-3-8 3 0 7 9 10 19 7-4 6-9 9-15 9C8 36 0 28 0 18z" fill="url(#ed2)" />
          <circle cx="9" cy="27.500" r="8.500" fill="#d2cfcc" />
          <circle cx="9" cy="25" r="4" fill="#8b8784" />
          <path d="M3 34c0-6 12-6 12 0-3 3-9 3-12 0z" fill="#8b8784" />
        </TaskButton>
        <TaskButton label="文件资源管理器" dot>
          <defs><linearGradient id="fo" x1="0" y1="0" x2="1" y2="1"><stop stopColor="#ffe07a" /><stop offset="1" stopColor="#fdbe26" /></linearGradient></defs>
          <path d="M0 3.500A1.500 1.500 0 0 1 1.500 2H11l4 3.500h21V10H0z" fill="#dd9c0c" />
          <path d="M0 8.500h12L15.500 5.500H36V33a1.500 1.500 0 0 1-1.500 1.500h-33A1.500 1.500 0 0 1 0 33z" fill="url(#fo)" />
          <path d="M6 34.500V27a3 3 0 0 1 3-3h18a3 3 0 0 1 3 3v7.500z" fill="#1174c4" />
          <path d="M11 29h14" stroke="#07488a" strokeWidth="1.600" />
        </TaskButton>
        <TaskButton label="Microsoft Store">
          <defs><linearGradient id="st" x1="0" y1="0" x2="0" y2="1"><stop stopColor="#0e6fc0" /><stop offset="1" stopColor="#24355c" /></linearGradient></defs>
          <path d="M.5 5h35v27a4 4 0 0 1-4 4h-27a4 4 0 0 1-4-4z" fill="url(#st)" />
          <path d="M9.500 7.500V2h17v5.500" stroke="#2fb7ee" strokeWidth="2" />
          <path d="M10.500 13h7v7h-7z" fill="#f25022" /><path d="M18.500 13h7v7h-7z" fill="#7fba00" />
          <path d="M10.500 21h7v7h-7z" fill="#00a4ef" /><path d="M18.500 21h7v7h-7z" fill="#ffb900" />
        </TaskButton>
        <TaskButton label="酷狗音乐">
          <rect x=".5" y="1" width="34" height="34" rx="6" fill="#fff" />
          <circle cx="17.500" cy="18" r="14.500" stroke="#35a7ee" strokeWidth="1.300" />
          <path d="M14 10.500v15M23.500 10.500l-8 7.500 8 7.500" stroke="#12a0f4" strokeWidth="3.600" />
          <circle cx="29.500" cy="30.500" r="6" fill="#fff" />
          <path d="M25.500 30a4 4 0 0 1 3-3.500" stroke="#ffc81e" strokeWidth="2.600" /><path d="M30.500 26.500a4 4 0 0 1 3 4" stroke="#2bd48b" strokeWidth="2.600" />
          <path d="M33 32.500a4 4 0 0 1-4 2" stroke="#ff2358" strokeWidth="2.600" /><path d="M28 34a4 4 0 0 1-2.500-3" stroke="#2560ee" strokeWidth="2.600" />
        </TaskButton>
        <TaskButton label="电脑管家" dot>
          <defs><linearGradient id="ge" x1="0" y1="0" x2="1" y2="1"><stop stopColor="#10b3b0" /><stop offset=".5" stopColor="#3b82e8" /><stop offset="1" stopColor="#8a3ff2" /></linearGradient></defs>
          <path d="M7 5l4 1 2-2.500h4l1.500 3 5 2 3 5 3 8 2 1v4l-3 1-1.500 3.500-3-.5-2 3-4.500-.5-1-3-4-2-3.500 1-3-3 1.500-3.500-1.500-2-3-.5v-4l3-1.500 1-2.500-2-3z" fill="url(#ge)" />
          <circle cx="19" cy="16.500" r="7" fill="#eee" />
          <path d="M15 9c7-5 16 3 13 12-1 2-3 2-5 2" stroke="#f99a26" strokeWidth="2.600" />
          <path d="M11 24l8-7" stroke="#2f7fe8" strokeWidth="4.500" />
          <path d="M18 11c-3 3-2 8 2 8.500 3 .5 5-2 5-5l-4 2-3-2z" fill="#2f7fe8" />
        </TaskButton>
        <TaskButton label="Trae">
          <rect x=".5" width="35" height="36" rx="6" fill="#1b1d24" />
          <path d="M8.500 11v13l6 5M27.500 11v13l-6 5M13 14v10M23 14v10" stroke="#5d6068" strokeWidth="2" />
          <path d="M7.500 9.500l9 5V31M28.500 9.500l-9 5V31" stroke="#b4b6ba" strokeWidth="1.800" />
          <path d="M18 4l3 4-3 3-3-3z" fill="#6f727a" />
        </TaskButton>
        <TaskButton label="四叶">
          <defs><linearGradient id="lf" x1="0" y1="0" x2="1" y2="1"><stop stopColor="#96dc5c" /><stop offset="1" stopColor="#3aa775" /></linearGradient><linearGradient id="lg" x1="0" y1="0" x2="1" y2="1"><stop stopColor="#3fb46d" /><stop offset="1" stopColor="#2482a8" /></linearGradient></defs>
          <path d="M2 1h9a7.500 7.500 0 0 1 7.500 7.500V18H9a8 8 0 0 1-8-8V2z" fill="url(#lf)" />
          <path d="M35 1v9a8 8 0 0 1-8 8h-8.500V9a8 8 0 0 1 8-8z" fill="url(#lg)" />
          <path d="M1 35v-8.500A7.500 7.500 0 0 1 8.500 19h9.500v8a8 8 0 0 1-8 8z" fill="url(#lg)" />
          <circle cx="27.500" cy="27.500" r="8" fill="#0f78e2" />
        </TaskButton>
        <TaskButton label="应用商店">
          <path d="M5 2h26a3 3 0 0 1 3 3l1 26a3 3 0 0 1-3 3H4a3 3 0 0 1-3-3L2 5a3 3 0 0 1 3-3z" fill="#12cd74" />
          <path d="M35 26l0 5a3 3 0 0 1-3 3H21c8-1 12-4 14-8z" fill="#0cae66" />
          <path d="M10 12c1 9 14 9 15 0" stroke="#fff" strokeWidth="3.200" strokeLinecap="round" />
        </TaskButton>
        <TaskButton label="IntelliJ IDEA" dot>
          <path d="M5 0l14 2-6 16L1 16z" fill="#f7295e" /><path d="M0 20l8-6v14l-5-4z" fill="#f98a2c" />
          <path d="M6 22l12 3-14 10z" fill="#d83bb0" /><path d="M25 1l11 10v19l-15 6-10-6 5-22z" fill="#107bf5" />
          <path d="M6.500 7H29v22H6.500z" fill="#000" />
          <path d="M9 10h5M11.500 10v8M9 18h5M17 10h4v6.500q-1 2-4 1.500M9 26h8" stroke="#fff" strokeWidth="2" />
        </TaskButton>
        <TaskButton label="微信开发者工具" dot>
          <path d="M18 3c10 0 17 6 17 14S28 31 18 31c-3 0-5-.5-7-1l-5 3 1-5C-6 17 5 3 18 3z" fill="#f6f6f6" stroke="#e2e2e2" strokeWidth=".8" />
          <path d="M15 11l5 3.500-5 3.500M21 20h6" stroke="#12b95f" strokeWidth="2.200" /><path d="M27 12.500h3.500v3.500H27z" fill="#12b95f" />
        </TaskButton>
        <TaskButton label="终端" dot>
          <rect y="4" width="36" height="27" rx="2" fill="#313131" />
          <path d="M2 4h10v5H0V6a2 2 0 0 1 2-2z" fill="#c6c6c6" /><path d="M12 4h12v5H12z" fill="#9b9b9b" /><path d="M24 4h10a2 2 0 0 1 2 2v3H24z" fill="#6a6a6a" />
          <path d="M6 13l7 6.500L6 26" stroke="#cfcfcf" strokeWidth="3.600" /><path d="M17 23h12v4H17z" fill="#f4f4f4" />
        </TaskButton>
        <TaskButton label="WPS" dot>
          <path d="M1 6.500h15l2.500 4.500H9l4.500 10L20 8.500q1-2 3-2h12q1 0 .5 1.500L25.500 29q-1 2-3 .5L18.500 22l-3.500 7.500q-1.500 1.500-3 0L.5 8Q0 6.500 1 6.500z" fill="#fa3318" />
          <path d="M23.500 20.500L28.500 11h-7l-1.500 3z" fill="#eee" />
          <path d="M18 10.500l2-3q1-1 3-1h5l-4 4z" fill="#ff8a1f" />
        </TaskButton>
        <TaskButton label="QQ浏览器" active>
          <defs><linearGradient id="qb" x1="1" y1="0" x2="0" y2="1"><stop stopColor="#1b6fe8" /><stop offset=".5" stopColor="#3197f4" /><stop offset="1" stopColor="#aee3fd" /></linearGradient></defs>
          <circle cx="18" cy="18" r="13.500" stroke="url(#qb)" strokeWidth="8.500" />
          <path d="M22 35c-7 0-7-8-1-8.500 2-7 11-7 12 0 4 1 4 8.500-1 8.500z" fill="#fff" stroke="#6f9bd0" strokeWidth=".8" />
        </TaskButton>
        <TaskButton label="AI 浏览器" dot>
          <defs><linearGradient id="ai" x1="1" y1="0" x2="0" y2="1"><stop stopColor="#06d6fb" /><stop offset="1" stopColor="#1179ea" /></linearGradient></defs>
          <path d="M2 12C6-3 32-3 34 12c0 3-2 5-5 5.500C22 19 13 20 9 23c3 4 9 5 14 4l-1 7.500C11 37 1 30 1 22c0-4 4-6 8-7 6-2 13-2 15-4-5-6-15-5-22 1z" fill="url(#ai)" />
          <path d="M17 23.500a2 2 0 0 1 2-2h16v11a2 2 0 0 1-2 2H16z" fill="#a23df0" />
          <path d="M20 32l3.500-8 3.500 8M21.500 29.500h4M31 24v8" stroke="#fff" strokeWidth="1.900" />
        </TaskButton>
      </div>

      <div className="flex items-center justify-end pr-7 text-[#1b1b1b]">
        <button aria-label="显示隐藏的图标" className="flex w-12 justify-center">
          <svg width="18" height="10" viewBox="0 0 18 10" fill="none"><path d="M1.500 9L9 1.500 16.500 9" stroke="currentColor" strokeWidth="2" /></svg>
        </button>
        <button aria-label="更新" className="flex w-12 justify-center">
          <Svg>
            <path d="M1 11.500C1.500-1 19-3 22 7.500M22.500.5v7.500H15M13 22.500C8 23 4 21 2 17M1.500 24v-7.500H9" stroke="currentColor" strokeWidth="1.500" />
            <circle cx="18" cy="18" r="6" fill="#ff9800" />
          </Svg>
        </button>
        <button aria-label="输入法" className="flex w-[46px] justify-center">
          <span className="text-[22px] leading-6">中</span>
        </button>
        <button aria-label="网络、音量和电池" className="ml-[14px] flex items-center gap-3">
          <Svg>
            <path d="M1 9.500c6-7 16-7 22 0M4.500 13.500c4-5 11-5 15 0M8 17c2.500-3 5.500-3 8 0" stroke="currentColor" strokeWidth="2" />
            <circle cx="12" cy="19" r="2" fill="currentColor" />
          </Svg>
          <Svg>
            <path d="M1.500 8.500H5L10.500 4v16L5 15.500H1.500z" stroke="currentColor" strokeWidth="1.700" strokeLinejoin="round" />
            <path d="M15 8.500l7.500 7.500M22.500 8.500L15 16" stroke="currentColor" strokeWidth="1.700" />
          </Svg>
          <Svg>
            <path d="M8 5.500h10a2.500 2.500 0 0 1 2.500 2.500v8a2.500 2.500 0 0 1-2.500 2.500H3.500A2.500 2.500 0 0 1 1 16v-3" stroke="currentColor" strokeWidth="1.700" />
            <path d="M8.500 8H18v8H4v-3h2zM21 9.500h1.500L24 11v2l-1.500 1.500H21zM5.500 0L1 7h3L3 12l5-7H5z" fill="currentColor" />
          </Svg>
        </button>
        <button className="ml-[27px] flex flex-col items-end text-[17px] leading-[25px]">
          <span>20:18</span>
          <span>2025/5/6</span>
        </button>
      </div>
    </footer>
  );
}

export default function App() {
  return (
    <div lang="zh-CN" className="flex min-h-screen flex-col bg-white font-['Noto_Sans','Noto_Sans_CJK_SC',sans-serif] text-black">
      <TabStrip />
      <div className="flex grow">
        <SideBar />
        <div className="flex min-w-0 grow flex-col">
          <Toolbar />
          <Bookmarks />
          <Page />
        </div>
      </div>
      <TaskBar />
    </div>
  );
}
